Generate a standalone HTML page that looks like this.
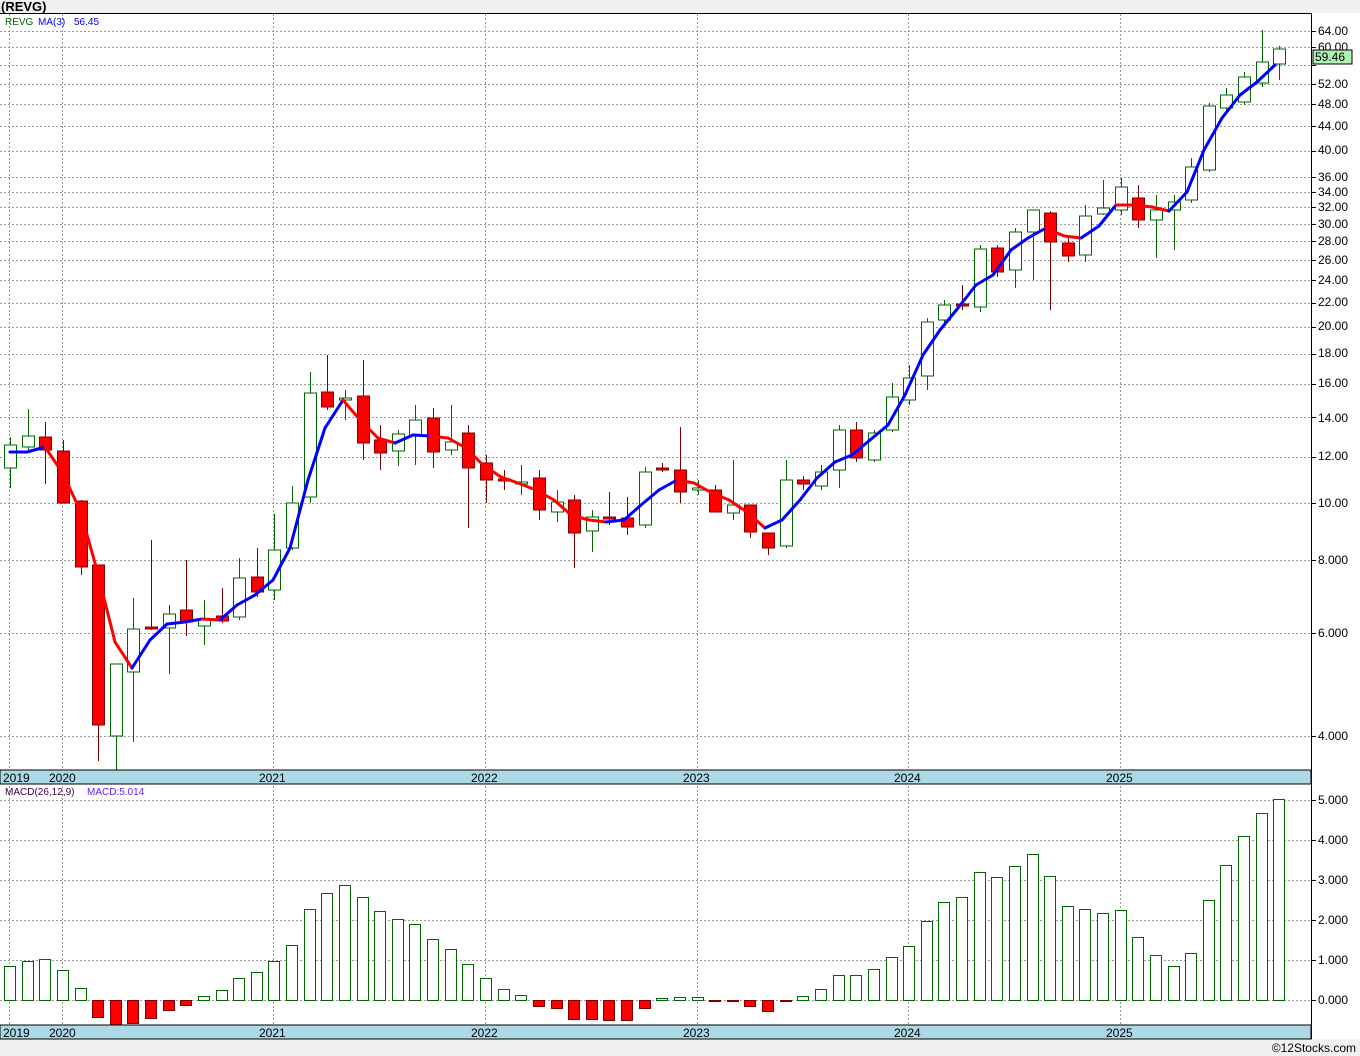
<!DOCTYPE html>
<html><head><meta charset="utf-8"><style>
body{margin:0;width:1360px;height:1056px;background:#f0f0f0;font-family:"Liberation Sans",sans-serif;overflow:hidden;position:relative}
svg{position:absolute;left:0;top:0}
</style></head><body>
<svg id="s" width="1360" height="1056" xmlns="http://www.w3.org/2000/svg" font-family="Liberation Sans, sans-serif">
<rect x="0" y="0" width="1360" height="1056" fill="#f0f0f0"/>
<rect x="0" y="13" width="1360" height="1026" fill="#fff"/>
<g id="grid" stroke="#999" stroke-dasharray="2,2" stroke-width="1"></g>
<g id="candles"></g>
<g id="ma" fill="none" stroke-width="3" stroke-linecap="round"></g>
<g id="macd"></g>
<rect x="0" y="770" width="1311" height="14" fill="#add8e6" stroke="#000"/>
<rect x="0" y="1025" width="1311" height="14" fill="#add8e6" stroke="#000"/>
<line x1="0" y1="13.5" x2="1311" y2="13.5" stroke="#000"/>
<line x1="1311.5" y1="13" x2="1311.5" y2="1039" stroke="#000"/>
<g id="ticks" stroke="#000"></g>
<text x="1" y="11" font-size="13" font-weight="bold">(REVG)</text>
<text x="5" y="25" font-size="10" fill="#006400">REVG</text>
<text x="38" y="25" font-size="10" fill="#0000ff">MA(3)</text>
<text x="74" y="25" font-size="10" fill="#0000ff">56.45</text>
<text x="5" y="795" font-size="10" fill="#400040">MACD(26,12,9)</text>
<text x="87" y="795" font-size="10" fill="#6020ff">MACD:5.014</text>
<g font-size="12" fill="#000">
<text x="3" y="782">2019</text><text x="49" y="782">2020</text><text x="259" y="782">2021</text><text x="471" y="782">2022</text><text x="683" y="782">2023</text><text x="894" y="782">2024</text><text x="1106" y="782">2025</text>
<text x="3" y="1037">2019</text><text x="49" y="1037">2020</text><text x="259" y="1037">2021</text><text x="471" y="1037">2022</text><text x="683" y="1037">2023</text><text x="894" y="1037">2024</text><text x="1106" y="1037">2025</text>
</g>
<g font-size="12" fill="#000" id="plabels">
<text x="1318" y="35">64.00</text><text x="1318" y="51">60.00</text><text x="1318" y="88">52.00</text><text x="1318" y="108">48.00</text><text x="1318" y="130">44.00</text><text x="1318" y="154">40.00</text><text x="1318" y="181">36.00</text><text x="1318" y="196">34.00</text><text x="1318" y="211">32.00</text><text x="1318" y="228">30.00</text><text x="1318" y="245">28.00</text><text x="1318" y="264">26.00</text><text x="1318" y="284">24.00</text><text x="1318" y="306">22.00</text><text x="1318" y="330">20.00</text><text x="1318" y="357">18.00</text><text x="1318" y="387">16.00</text><text x="1318" y="422">14.00</text><text x="1318" y="460">12.00</text><text x="1318" y="507">10.00</text><text x="1318" y="564">8.000</text><text x="1318" y="637">6.000</text><text x="1318" y="740">4.000</text>
<text x="1318" y="804">5.000</text><text x="1318" y="844">4.000</text><text x="1318" y="884">3.000</text><text x="1318" y="924">2.000</text><text x="1318" y="964">1.000</text><text x="1318" y="1004">0.000</text>
</g>
<rect x="1313" y="50" width="39" height="14" fill="#b0f0b0" stroke="#000"/>
<text x="1315" y="61" font-size="12">59.46</text>
<text x="1356" y="1052" font-size="12" text-anchor="end" fill="#000">©12Stocks.com</text>
</svg>
<script>
var NS="http://www.w3.org/2000/svg";
function el(p,t,a){var e=document.createElementNS(NS,t);for(var k in a)e.setAttribute(k,a[k]);document.getElementById(p).appendChild(e);return e;}
var Y=function(p){return 736-176.25*Math.log2(p/4);};
[4,6,8,10,12,14,16,18,20,22,24,26,28,30,32,34,36,40,44,48,52,56,60,64].forEach(function(p){var y=Math.round(Y(p))+.5;el("grid","line",{x1:0,x2:1311,y1:y,y2:y});el("ticks","line",{x1:1311,x2:1316,y1:y,y2:y});});
[800,840,880,920,960,1000].forEach(function(y){el("grid","line",{x1:0,x2:1311,y1:y+.5,y2:y+.5});el("ticks","line",{x1:1311,x2:1316,y1:y+.5,y2:y+.5});});
[9,62,273,485,697,908,1120].forEach(function(x){el("grid","line",{x1:x+.5,x2:x+.5,y1:14,y2:1025});});
var C=[[1,445,468,437,488],[1,436,447,409,450],[0,437,450,422,484],[0,451,503,440,503],[0,501,567,500,575],[0,565,725,565,761],[1,664,736,664,770],[1,629,672,598,742],[0,627,629,540,630],[1,614,628,605,674],[0,610,622,560,636],[1,620,626,600,645],[0,616,621,588,623],[1,578,617,558,620],[0,577,592,548,597],[1,550,590,514,600],[1,503,548,486,550],[1,393,497,372,503],[0,392,407,355,410],[1,398,400,390,420],[0,396,443,360,460],[0,440,453,425,470],[1,434,451,430,466],[1,420,435,405,465],[0,418,452,408,468],[1,442,450,405,455],[0,433,468,425,528],[0,463,480,455,503],[0,479,481,470,490],[1,482,484,465,495],[0,478,510,470,520],[1,502,512,490,522],[0,500,533,495,568],[1,517,531,510,552],[0,517,519,492,525],[0,518,527,497,535],[1,472,525,467,528],[0,468,470,463,472],[0,470,492,427,503],[1,488,490,480,495],[0,490,512,485,512],[1,505,513,460,520],[0,505,532,505,538],[0,533,548,533,555],[1,480,546,460,548],[0,480,484,476,490],[1,472,486,465,490],[1,430,470,425,488],[0,430,458,422,462],[1,433,460,430,462],[1,397,430,383,432],[1,378,400,365,405],[1,322,376,318,390],[1,305,320,300,325],[0,304,306,285,310],[1,249,307,245,312],[0,248,272,245,277],[1,232,270,228,288],[1,210,232,210,280],[0,213,242,211,310],[0,243,256,238,262],[1,216,255,205,262],[1,208,214,180,215],[1,187,210,178,215],[0,198,220,185,228],[1,210,220,195,258],[1,202,210,195,250],[1,167,200,158,203],[1,106,170,103,172],[1,95,108,88,112],[1,77,102,72,105],[1,62,83,30,87],[1,49,64,46,80]];
var M=[966,961,959,970,988,1017,1025,1023,1018,1010,1005,996,990,978,972,961,945,909,893,885,897,911,919,924,939,949,964,978,989,995,1006,1008,1019,1019,1020,1020,1008,998,997,997,1001,1001,1006,1011,1001,996,989,975,975,969,957,946,921,902,897,872,877,866,854,876,906,909,913,910,937,955,966,953,900,865,836,813,799];
function X(i){return 10+17.63*i;}
C.forEach(function(c,i){var x=Math.round(X(i))+.5;var col=c[0]?"#006400":"#800000";
el("candles","line",{x1:x,x2:x,y1:c[3],y2:c[4],stroke:col});
el("candles","rect",{x:x-6,y:c[1],width:12,height:Math.max(1,c[2]-c[1]),fill:c[0]?"#fff":"#f00",stroke:col});});
M.forEach(function(v,i){var x=Math.round(X(i))-5.5;
if(v<=1000)el("macd","rect",{x:x,y:v+.5,width:11,height:1000-v,fill:"#fff",stroke:"#006400"});
else el("macd","rect",{x:x,y:1000.5,width:11,height:v-1000,fill:"#f00",stroke:"#800000"});});
var P=[[10,452],[27,452],[45,447,1],[62,472,0],[80,510,0],[97,570,0],[115,642,0],[132,668,0],[150,640,1],[167,624,1],[185,622,1],[202,619,1],[220,620,0],[237,605,1],[255,595,1],[273,580,1],[290,548,1],[308,480,1],[325,428,1],[343,400,1],[360,420,0],[378,438,0],[395,443,0],[413,435,1],[430,436,1],[448,438,0],[466,448,0],[483,465,0],[501,477,0],[518,483,0],[536,490,0],[554,500,0],[571,515,0],[589,520,0],[606,522,0],[624,520,1],[641,505,1],[659,490,1],[677,480,1],[694,483,0],[712,493,0],[729,500,0],[747,512,0],[765,528,0],[782,520,1],[800,500,1],[817,478,1],[835,462,1],[852,455,1],[870,440,1],[888,425,1],[905,395,1],[923,355,1],[940,330,1],[958,308,1],[976,285,1],[993,275,1],[1011,250,1],[1028,238,1],[1046,228,1],[1064,236,0],[1081,238,0],[1099,226,1],[1116,205,1],[1134,205,0],[1152,207,0],[1169,211,0],[1187,192,1],[1204,150,1],[1222,118,1],[1240,95,1],[1257,82,1],[1275,65,1]];
for(var i=1;i<P.length;i++){var c=(P[i][2]===0)?"#ff0000":"#0000ff";el("ma","line",{x1:P[i-1][0],y1:P[i-1][1],x2:P[i][0],y2:P[i][1],stroke:c});}
</script>
</body></html>
